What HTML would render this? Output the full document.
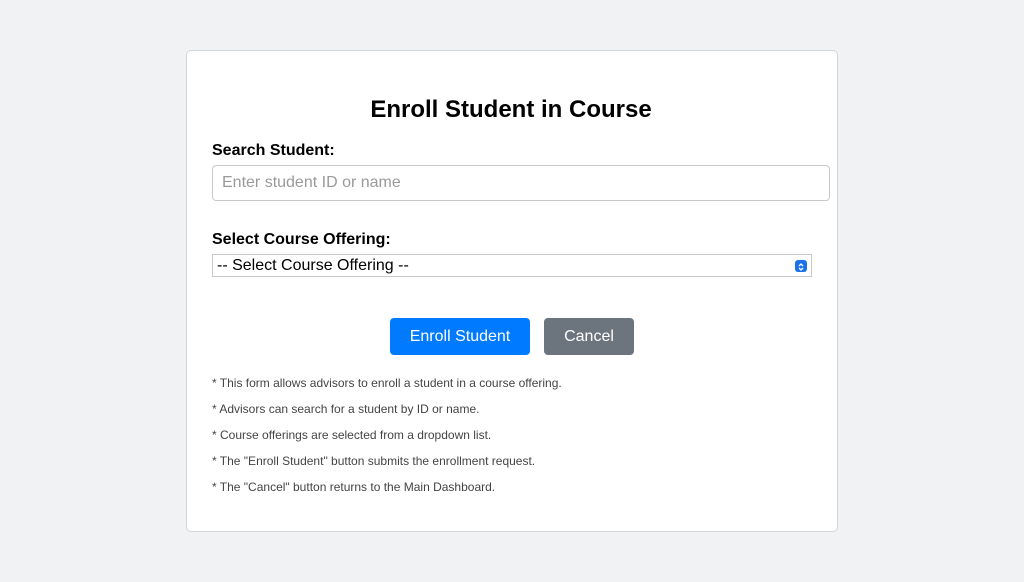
<!DOCTYPE html>
<html><head><meta charset="utf-8"><style>
html,body{margin:0;padding:0;}
body{width:1024px;height:582px;background:#f1f2f4;font-family:"Liberation Sans",Arial,sans-serif;position:relative;overflow:hidden;}
.card{position:absolute;left:186px;top:50px;width:652px;height:482px;background:#fff;border:1px solid #d3d6da;border-radius:5px;box-sizing:border-box;}
h1{position:absolute;left:0;width:650px;top:96px;margin:0;text-align:center;font-size:24px;font-weight:bold;color:#000;line-height:28px;}
.abs{position:absolute;}
.lbl{font-size:16px;font-weight:bold;color:#000;}
.input{left:212px;top:165px;width:618px;height:36px;border:1px solid #c7c9cc;border-radius:4px;box-sizing:border-box;font-size:16px;color:#9a9a9a;padding:8px 9px;line-height:18px;}
.sel{left:212px;top:254px;width:600px;height:23px;border:1px solid #c7c9cc;box-sizing:border-box;font-size:16px;color:#000;padding:2px 4px;line-height:18px;}
.arr{position:absolute;right:4px;top:5px;width:12px;height:12px;background:#1a73e8;border-radius:3px;}
.btn{top:318px;height:37px;border-radius:4px;color:#fff;font-size:16px;text-align:center;line-height:37px;}
.note{left:212px;font-size:12px;color:#444;line-height:14px;}
</style></head><body>
<div class="card"></div>
<h1 class="abs" style="left:186px">Enroll Student in Course</h1>
<div class="abs lbl" style="left:212px;top:142px">Search Student:</div>
<div class="abs input">Enter student ID or name</div>
<div class="abs lbl" style="left:212px;top:231px">Select Course Offering:</div>
<div class="abs sel">-- Select Course Offering --<div class="arr"><svg width="12" height="12" viewBox="0 0 12 12"><path d="M4 5l2-2 2 2M4 7l2 2 2-2" stroke="#fff" stroke-width="1.3" fill="none"/></svg></div></div>
<div class="abs btn" style="left:390px;width:140px;background:#007bff">Enroll Student</div>
<div class="abs btn" style="left:544px;width:90px;background:#6c757d">Cancel</div>
<div class="abs note" style="top:376px">* This form allows advisors to enroll a student in a course offering.</div>
<div class="abs note" style="top:402px">* Advisors can search for a student by ID or name.</div>
<div class="abs note" style="top:428px">* Course offerings are selected from a dropdown list.</div>
<div class="abs note" style="top:454px">* The "Enroll Student" button submits the enrollment request.</div>
<div class="abs note" style="top:480px">* The "Cancel" button returns to the Main Dashboard.</div>
</body></html>
